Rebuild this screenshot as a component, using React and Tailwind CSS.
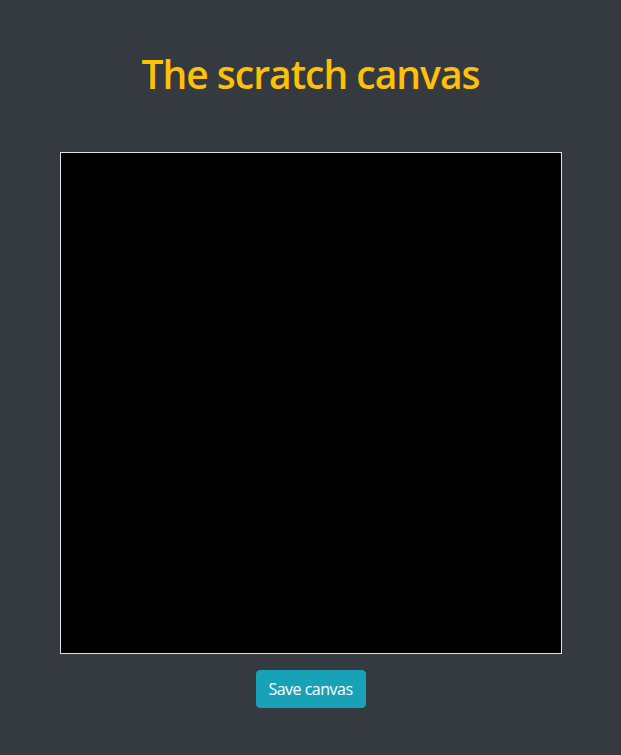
import React from 'react';

const App = () => {
  return (
    <div className="min-h-screen bg-[#343a40] flex flex-col items-center pt-[50px] font-['Open_Sans',sans-serif]">
      {/* Title */}
      <h1 className="text-[39px] leading-[48px] font-semibold text-[#ffc107] tracking-[-1px]">The scratch canvas</h1>

      {/* Canvas */}
      <div className="mt-[54px] w-[502px] h-[502px] bg-black border border-[#dee2e6]" />

      {/* Save button */}
      <button className="mt-4 h-[38px] w-[110px] rounded bg-[#17a2b8] border border-[#17a2b8] text-white text-base leading-6 tracking-[-0.5px]">
        Save canvas
      </button>
    </div>
  );
};

export default App;
